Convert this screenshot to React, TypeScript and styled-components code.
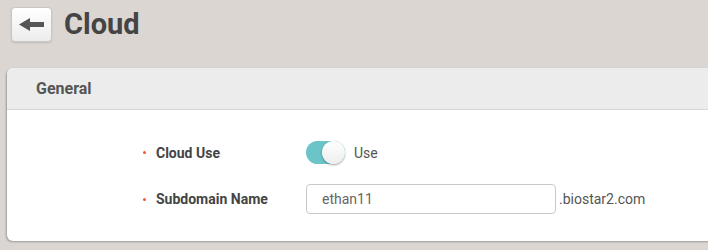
import React from 'react'
import styled, { createGlobalStyle } from 'styled-components'

const GlobalStyle = createGlobalStyle`
  html, body {
    margin: 0;
    padding: 0;
    background: #dbd6d2;
    font-family: Roboto, 'Liberation Sans', sans-serif;
    overflow: hidden;
  }
`

const Page = styled.div`
  width: 708px;
  height: 250px;
  overflow: hidden;
`

const TopBar = styled.div`
  display: flex;
  align-items: center;
  padding: 7px 0 0 11px;
  height: 35px;
`

const BackButton = styled.button`
  width: 41px;
  height: 35px;
  padding: 0;
  border: 1px solid #c9c6c3;
  border-radius: 4px;
  background: linear-gradient(#ffffff, #ececec);
  box-shadow: 0 1px 2px rgba(0, 0, 0, 0.12);
  display: flex;
  align-items: center;
  justify-content: center;
  cursor: pointer;
`

const Title = styled.h1`
  margin: 0 0 0 12px;
  font-size: 29px;
  font-weight: 700;
  color: #444444;
  line-height: 35px;
`

const Panel = styled.section`
  margin: 26px -12px 0 7px;
  border-radius: 6px;
  background: #ffffff;
  box-shadow: -1px 1px 2px rgba(0, 0, 0, 0.28);
  overflow: hidden;
`

const PanelHeader = styled.div`
  height: 41px;
  background: #ececec;
  border-bottom: 1px solid #d6d6d6;
  display: flex;
  align-items: center;
  padding-left: 29px;
  font-size: 16px;
  font-weight: 700;
  color: #555555;
`

const PanelBody = styled.div`
  display: grid;
  grid-template-columns: 163px 1fr;
  row-gap: 20px;
  align-items: center;
  padding: 31px 0 27px 136px;
`

const Label = styled.div`
  display: flex;
  align-items: center;
  font-size: 14px;
  font-weight: 700;
  color: #444444;
  &::before {
    content: '';
    width: 3px;
    height: 3px;
    border-radius: 50%;
    background: #f05a3c;
    margin-right: 10px;
  }
`

const Control = styled.div`
  display: flex;
  align-items: center;
  font-size: 14px;
  color: #555555;
`

const Toggle = styled.div<{ on: boolean }>`
  width: 39px;
  height: 23px;
  border-radius: 12px;
  background: ${(p) => (p.on ? '#6ac4c8' : '#cccccc')};
  position: relative;
  margin-right: 9px;
  &::after {
    content: '';
    position: absolute;
    top: 0;
    left: ${(p) => (p.on ? '16px' : '0')};
    width: 23px;
    height: 23px;
    border-radius: 50%;
    background: linear-gradient(#ffffff, #eeeeee);
    box-shadow: 0 1px 2px rgba(0, 0, 0, 0.35);
  }
`

const TextInput = styled.input`
  width: 250px;
  height: 30px;
  box-sizing: border-box;
  border: 1px solid #c8c8c8;
  border-radius: 4px;
  padding: 0 15px;
  font-family: Roboto, 'Liberation Sans', sans-serif;
  font-size: 14px;
  color: #666666;
  margin-right: 3px;
  outline: none;
`

const App: React.FC = () => (
  <Page>
    <GlobalStyle />
    <TopBar>
      <BackButton aria-label="Back">
        <svg width="25" height="13" viewBox="0 0 25 13">
          <path d="M0 6.5 L11 0 L11 4 L25 4 L25 9 L11 9 L11 13 Z" fill="#555555" />
        </svg>
      </BackButton>
      <Title>Cloud</Title>
    </TopBar>
    <Panel>
      <PanelHeader>General</PanelHeader>
      <PanelBody>
        <Label>Cloud Use</Label>
        <Control>
          <Toggle on />
          Use
        </Control>
        <Label>Subdomain Name</Label>
        <Control>
          <TextInput defaultValue="ethan11" />
          .biostar2.com
        </Control>
      </PanelBody>
    </Panel>
  </Page>
)

export default App
